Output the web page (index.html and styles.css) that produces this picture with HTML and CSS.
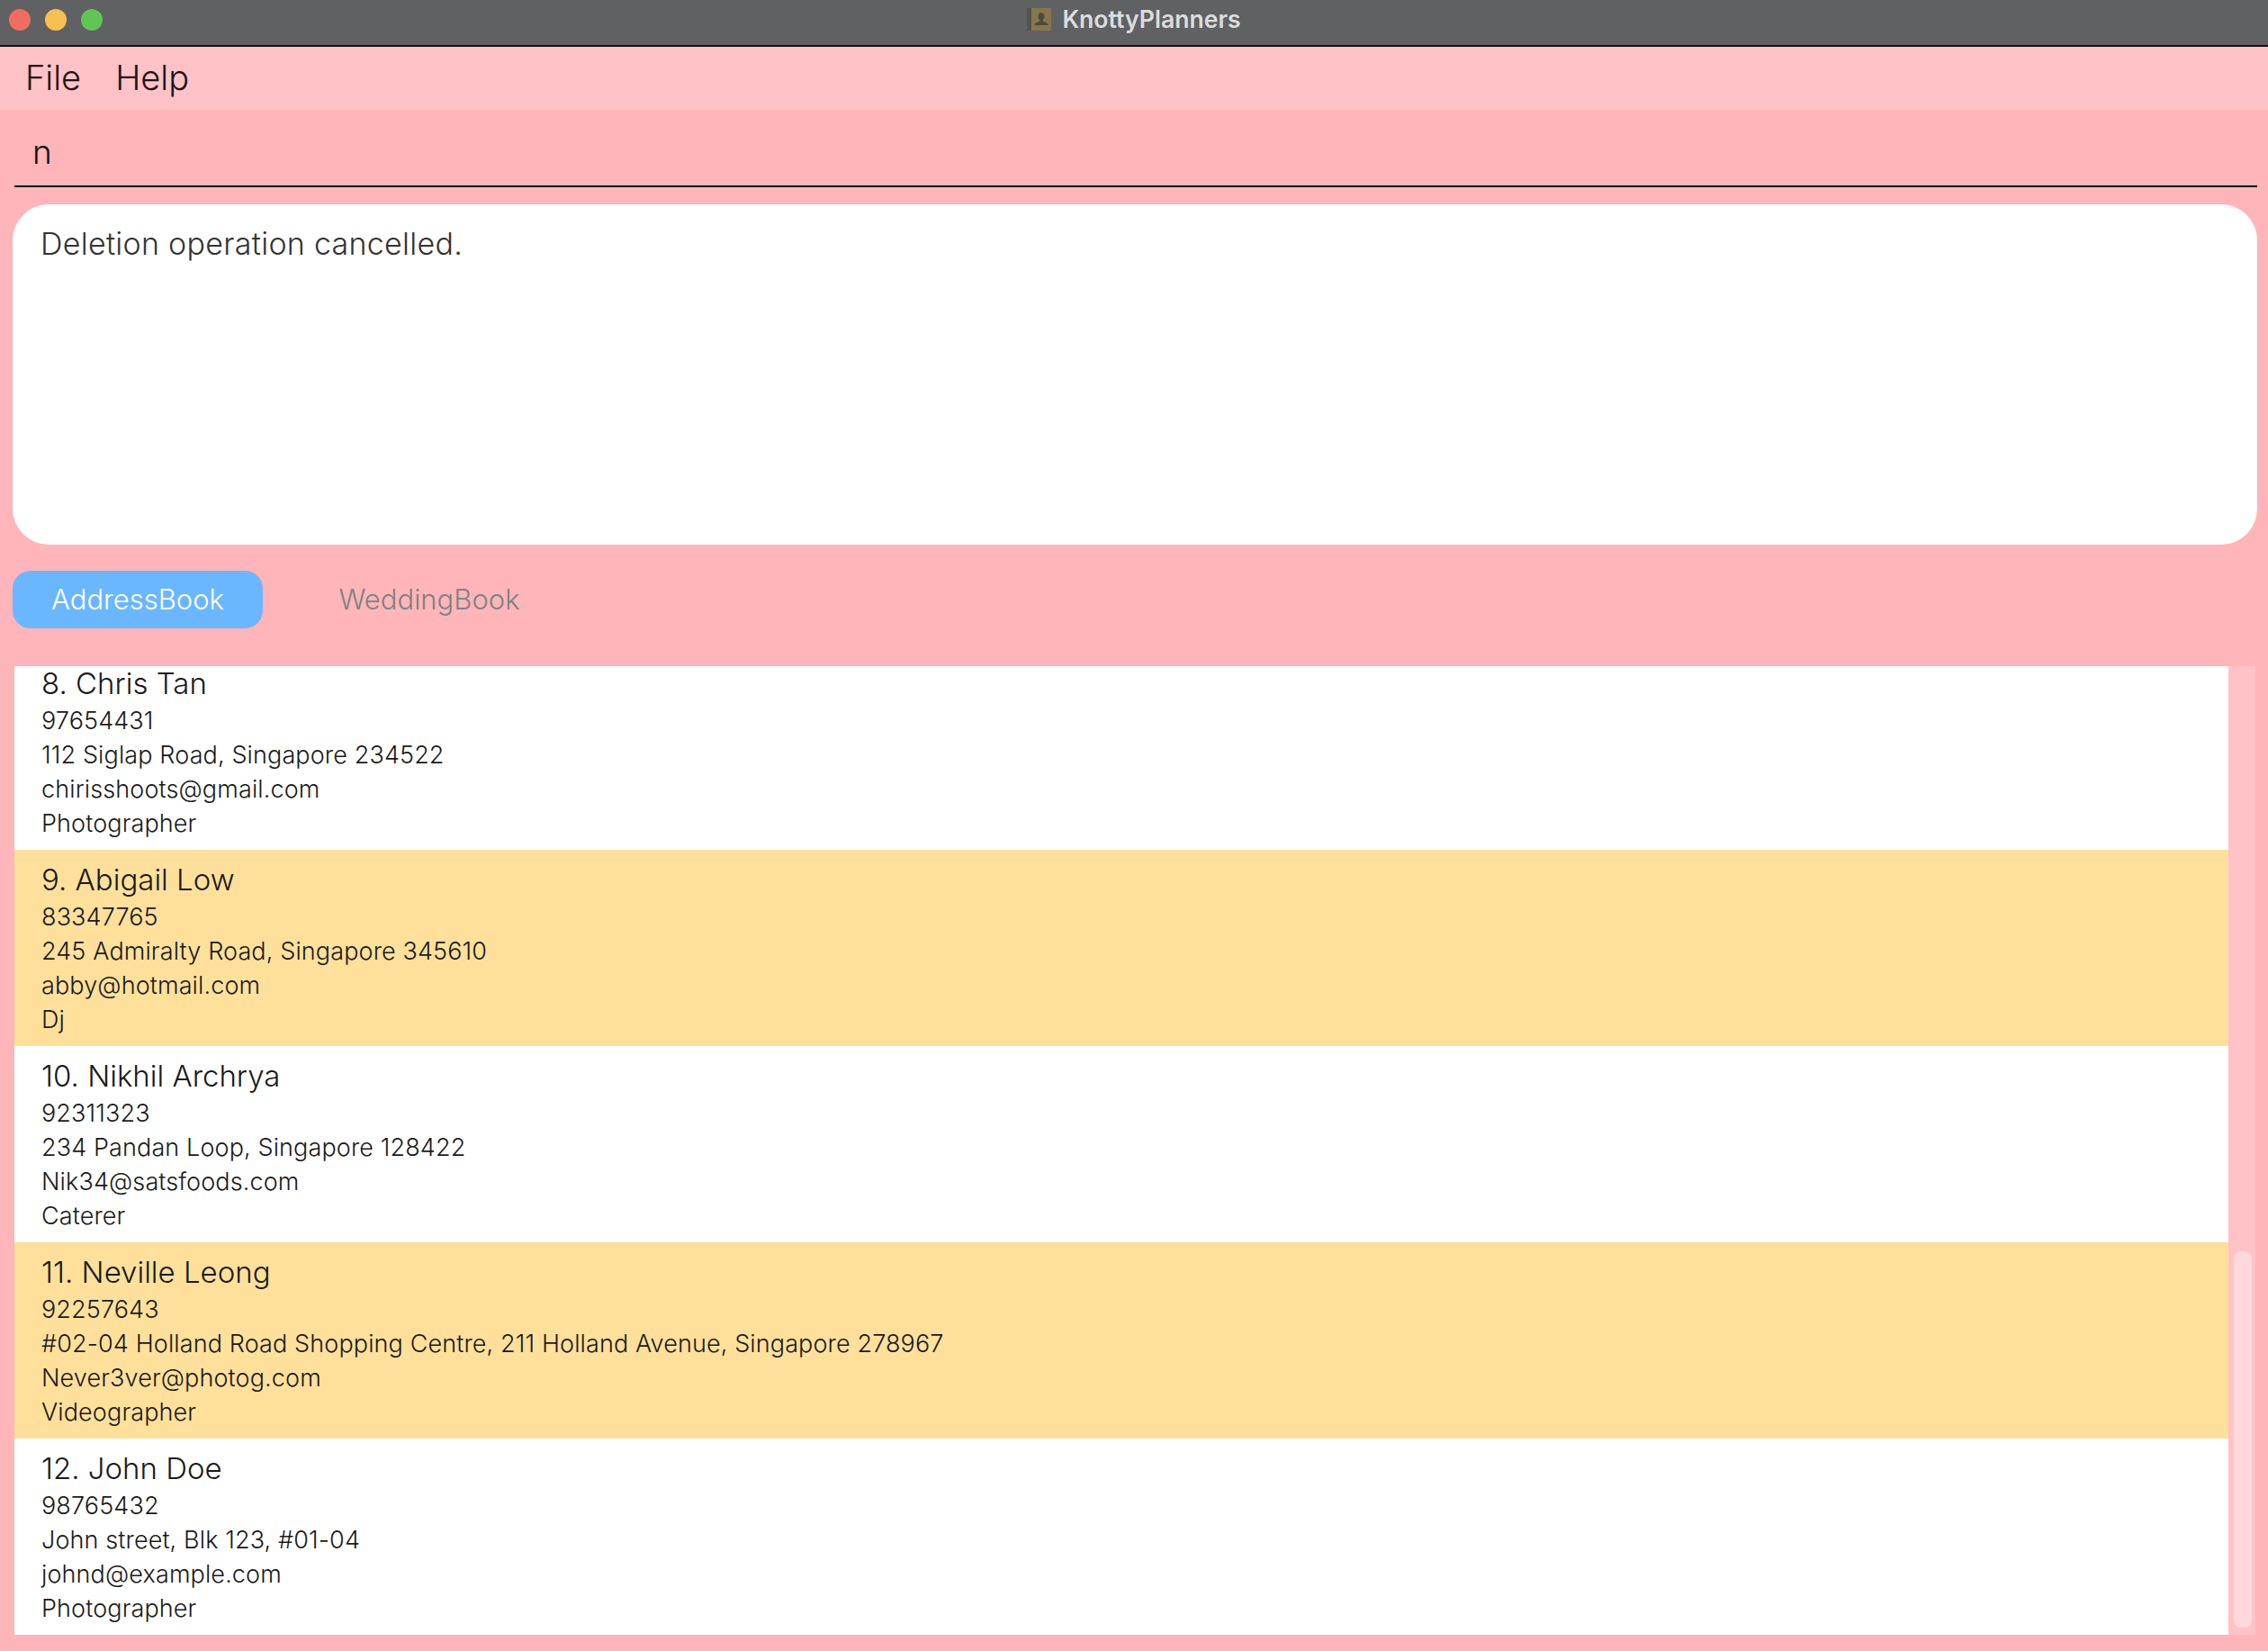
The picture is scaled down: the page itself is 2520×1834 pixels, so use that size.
FILE: index.html
```html
<!DOCTYPE html>
<html lang="en">
<head>
<meta charset="utf-8">
<title>KnottyPlanners</title>
<link rel="stylesheet" href="styles.css">
</head>
<body>
<div class="window">
  <header class="titlebar">
    <div class="lights">
      <span class="light red"></span>
      <span class="light yellow"></span>
      <span class="light green"></span>
    </div>
    <div class="title">
      <svg class="app-icon" viewBox="0 0 27 25" width="27" height="25" aria-hidden="true">
        <rect x="0" y="0" width="27" height="25" rx="1" fill="#85764f"/>
        <rect x="0" y="0" width="5" height="25" fill="#55534e"/>
        <path d="M16 5c2.4 0 3.6 1.800 3.600 4 0 2-1 3.400-1.800 4.200v1.400l4.700 2.200c.7.3 1 .8 1 1.700v.5H8.500v-.5c0-.9.300-1.400 1-1.700l4.700-2.200v-1.400c-.8-.8-1.800-2.200-1.800-4.200 0-2.200 1.200-4 3.600-4z" fill="#4f4a3a"/>
      </svg>
      <span class="title-text">KnottyPlanners</span>
    </div>
  </header>
  <nav class="menubar">
    <span class="menu-item">File</span>
    <span class="menu-item">Help</span>
  </nav>
  <main class="content">
    <div class="command"><span class="command-text">n</span></div>
    <div class="result">Deletion operation cancelled.</div>
    <div class="tabs">
      <span class="tab active">AddressBook</span>
      <span class="tab">WeddingBook</span>
    </div>
    <div class="list-wrap">
      <div class="list">
        <div class="list-inner">
          <article class="card">
            <div class="name">8. Chris Tan</div>
            <div class="line">97654431</div>
            <div class="line">112 Siglap Road, Singapore 234522</div>
            <div class="line">chirisshoots@gmail.com</div>
            <div class="line">Photographer</div>
          </article>
          <article class="card alt">
            <div class="name">9. Abigail Low</div>
            <div class="line">83347765</div>
            <div class="line">245 Admiralty Road, Singapore 345610</div>
            <div class="line">abby@hotmail.com</div>
            <div class="line">Dj</div>
          </article>
          <article class="card">
            <div class="name">10. Nikhil Archrya</div>
            <div class="line">92311323</div>
            <div class="line">234 Pandan Loop, Singapore 128422</div>
            <div class="line">Nik34@satsfoods.com</div>
            <div class="line">Caterer</div>
          </article>
          <article class="card alt">
            <div class="name">11. Neville Leong</div>
            <div class="line">92257643</div>
            <div class="line">#02-04 Holland Road Shopping Centre, 211 Holland Avenue, Singapore 278967</div>
            <div class="line">Never3ver@photog.com</div>
            <div class="line">Videographer</div>
          </article>
          <article class="card">
            <div class="name">12. John Doe</div>
            <div class="line">98765432</div>
            <div class="line">John street, Blk 123, #01-04</div>
            <div class="line">johnd@example.com</div>
            <div class="line">Photographer</div>
          </article>
        </div>
      </div>
      <div class="scrollbar"><div class="thumb"></div></div>
    </div>
  </main>
</div>
</body>
</html>
```
FILE: styles.css
```css
* { box-sizing: border-box; }
html, body { margin: 0; padding: 0; }
body {
  width: 2520px;
  height: 1834px;
  overflow: hidden;
  background: #ffb5b9;
  font-family: "Inter", "Liberation Sans", sans-serif;
}
.window {
  display: flex;
  flex-direction: column;
  height: 1834px;
}
.titlebar {
  position: relative;
  flex: none;
  height: 52px;
  background: #606163;
  border-bottom: 2px solid #111;
  display: flex;
  align-items: center;
  justify-content: center;
}
.lights {
  position: absolute;
  left: 10px;
  top: 10px;
  display: flex;
  gap: 16px;
}
.light { width: 24px; height: 24px; border-radius: 50%; }
.red { background: #f26d60; }
.yellow { background: #f6c050; }
.green { background: #61c554; }
.title {
  display: flex;
  align-items: center;
  gap: 12px;
  margin-top: -8px;
}
.app-icon { display: block; }
.title-text {
  font-size: 26.6px;
  font-weight: 600;
  color: #dcdcde;
}
.menubar {
  flex: none;
  height: 70px;
  background: #ffc2c7;
  display: flex;
  align-items: center;
  gap: 38px;
  padding: 0 0 3px 28px;
}
.menu-item {
  font-size: 38px;
  font-weight: 350;
  color: #1c1416;
}
.content {
  flex: 1;
  display: flex;
  flex-direction: column;
  padding: 0 12px 18px 14px;
}
.command {
  flex: none;
  height: 86px;
  margin: 0 0 19px 2px;
  padding: 25px 0 0 20px;
  border-bottom: 2px solid #000;
}
.command-text {
  font-size: 37px;
  line-height: 44px;
  display: block;
  font-weight: 350;
  color: #111;
}
.result {
  flex: none;
  height: 378px;
  background: #fff;
  border-radius: 40px;
  padding: 21px 31px;
  font-size: 34px;
  line-height: 46px;
  letter-spacing: 0.28px;
  font-weight: 350;
  color: #333;
}
.tabs {
  flex: none;
  display: flex;
  align-items: center;
  margin-top: 29px;
  height: 64px;
}
.tab {
  width: 278px;
  height: 64px;
  padding-bottom: 2px;
  border-radius: 20px;
  display: flex;
  align-items: center;
  justify-content: center;
  font-size: 31px;
  font-weight: 350;
  color: #7f8283;
}
.tab + .tab { margin-left: 46px; }
.tab.active {
  background: #6bb7ff;
  color: #fff;
}
.list-wrap {
  flex: 1;
  display: flex;
  margin: 42px 2px 0 2px;
  min-height: 0;
}
.list {
  width: 2460px;
  overflow: hidden;
}
.list-inner { margin-top: -14px; }
.card {
  height: 218px;
  background: #fff;
  padding: 10px 0 12px 30px;
  color: #1a1a1a;
}
.card.alt { background: #fee09b; }
.name {
  font-size: 33px;
  line-height: 46px;
  font-weight: 350;
}
.line {
  font-size: 27px;
  line-height: 38px;
  letter-spacing: 0.12px;
  font-weight: 350;
}
.scrollbar {
  flex: none;
  width: 30px;
  background: #ffc2c7;
  padding: 650px 4px 8px 6px;
}
.thumb {
  height: 100%;
  background: #fdd9dc;
  border-radius: 8px;
}
```
